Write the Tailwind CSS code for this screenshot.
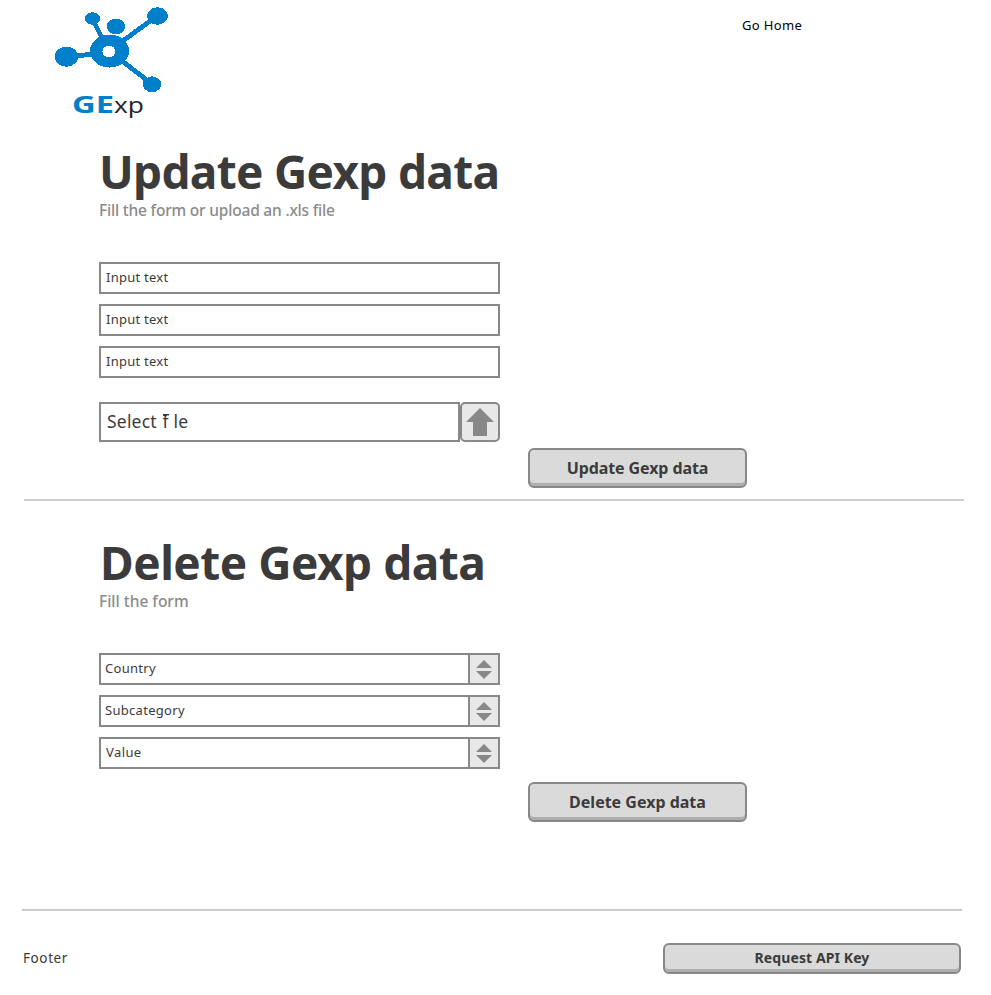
<!DOCTYPE html>
<html lang="en">
<head>
<meta charset="utf-8">
<title>Gexp</title>
<script src="https://cdn.jsdelivr.net/npm/@tailwindcss/browser@4"></script>
</head>
<body class="h-[995px] w-[991px] overflow-hidden bg-white font-['Noto_Sans',sans-serif] text-[#3b3b3b]">
<header class="flex h-[145px] items-start">
  <svg class="ml-[40px] h-[125px] w-[150px]" viewBox="0 0 150 125" fill="#0080cb" shape-rendering="crispEdges">
    <g stroke="#0080cb"><path d="M69 51L117 16M69 51L112 84M54 22L64 42M26 57L54 54" stroke-width="4.8"/></g>
    <ellipse cx="69.500" cy="51" rx="19.500" ry="16.500"/>
    <ellipse cx="117.500" cy="16" rx="10.500" ry="8.700"/>
    <ellipse cx="52.500" cy="18.500" rx="7.500" ry="6.200"/>
    <ellipse cx="76" cy="26.500" rx="9.200" ry="7.700"/>
    <ellipse cx="26.500" cy="56.700" rx="11.700" ry="10"/>
    <ellipse cx="112" cy="84.300" rx="9.200" ry="7.900"/>
    <ellipse cx="69" cy="51.500" rx="6.500" ry="6" fill="#fff"/>
    <text x="32" y="113" font-family="Open Sans, sans-serif" font-weight="700" font-size="23.500" textLength="42" lengthAdjust="spacingAndGlyphs">GE</text>
    <text x="74" y="113" font-family="Open Sans, sans-serif" font-weight="500" font-size="21" fill="#222" textLength="30" lengthAdjust="spacingAndGlyphs">xp</text>
  </svg>
  <a class="mt-[15px] ml-[552px] text-[13px] leading-5 tracking-[0.35px] text-black">Go Home</a>
</header>
<main>
  <section class="h-[354px] pl-[99px]">
    <h1 class="h-[55px] text-[46px] leading-[52px] font-bold tracking-[-0.7px] whitespace-nowrap">Update Gexp data</h1>
    <p class="h-5 text-[15.5px] leading-5 font-medium tracking-[-0.2px] text-[#8b8b8b]">Fill the form or upload an .xls file</p>
    <div class="mt-[42px] flex w-[401px] flex-col gap-[10px] text-[13px] leading-[26px] tracking-[0.25px]">
      <div class="h-8 border-2 border-[#888] pl-[5px]">Input text</div>
      <div class="h-8 border-2 border-[#888] pl-[5px]">Input text</div>
      <div class="h-8 border-2 border-[#888] pl-[5px]">Input text</div>
    </div>
    <div class="mt-6 flex h-10 w-[401px]">
      <div class="w-[361px] border-2 border-[#888] pl-[6px] text-[17.5px] leading-[35px] tracking-[0.2px]">Select <span class="relative ml-px">f<i class="absolute top-[5px] left-0 h-[2px] w-[4px] bg-[#3b3b3b]"></i></span> le</div>
      <div class="flex w-10 items-center justify-center rounded-[5px] border-2 border-[#888] bg-[#e8e8e8]">
        <svg class="h-7 w-7" viewBox="0 0 28 28" fill="#888"><path d="M14 0L28 14H21V28H7V14H0Z"/></svg>
      </div>
    </div>
    <button class="mt-[6px] ml-[429px] block h-10 w-[219px] rounded-[6px] border-2 border-[#888] bg-[#dadada] text-[16px] leading-[36px] font-bold tracking-[-0.1px] shadow-[inset_0_-3px_0_#aeaeae]">Update Gexp data</button>
  </section>
  <hr class="ml-6 h-[2px] w-[940px] border-0 bg-[#ccc]">
  <section class="h-[408px] pt-[35px] pl-[99px]">
    <h1 class="h-[55px] pl-px text-[46px] leading-[52px] font-bold tracking-[-0.5px] whitespace-nowrap">Delete Gexp data</h1>
    <p class="h-5 text-[15.5px] leading-5 font-medium text-[#8b8b8b]">Fill the form</p>
    <div class="mt-[42px] flex w-[401px] flex-col gap-[10px] text-[13px] leading-[26px] tracking-[0.3px]">
      <div class="flex h-8 border-2 border-[#888]"><span class="w-[367px] pl-1">Country</span><span class="flex w-[30px] items-center justify-center border-l-2 border-[#888] bg-[#e8e8e8]"><svg class="h-[19px] w-4" viewBox="0 0 16 19" fill="#888"><path d="M8 0L16 8H0ZM8 19L16 11H0Z"/></svg></span></div>
      <div class="flex h-8 border-2 border-[#888]"><span class="w-[367px] pl-1">Subcategory</span><span class="flex w-[30px] items-center justify-center border-l-2 border-[#888] bg-[#e8e8e8]"><svg class="h-[19px] w-4" viewBox="0 0 16 19" fill="#888"><path d="M8 0L16 8H0ZM8 19L16 11H0Z"/></svg></span></div>
      <div class="flex h-8 border-2 border-[#888]"><span class="w-[367px] pl-[5px] tracking-[0.4px]">Value</span><span class="flex w-[30px] items-center justify-center border-l-2 border-[#888] bg-[#e8e8e8]"><svg class="h-[19px] w-4" viewBox="0 0 16 19" fill="#888"><path d="M8 0L16 8H0ZM8 19L16 11H0Z"/></svg></span></div>
    </div>
    <button class="mt-[13px] ml-[429px] block h-10 w-[219px] rounded-[6px] border-2 border-[#888] bg-[#dadada] text-[16px] leading-[36px] font-bold shadow-[inset_0_-3px_0_#aeaeae]">Delete Gexp data</button>
  </section>
</main>
<footer>
  <hr class="ml-[22px] h-[2px] w-[940px] border-0 bg-[#ccc]">
  <div class="mt-8 mr-[30px] ml-[23px] flex h-[31px] justify-between">
    <span class="text-[13.5px] leading-[30px] tracking-[0.6px]">Footer</span>
    <button class="w-[298px] rounded-[6px] border-2 border-[#888] bg-[#dadada] pb-px text-[14px] leading-[26px] font-bold tracking-[0.1px] shadow-[inset_0_-3px_0_#aeaeae]">Request API Key</button>
  </div>
</footer>
</body>
</html>
